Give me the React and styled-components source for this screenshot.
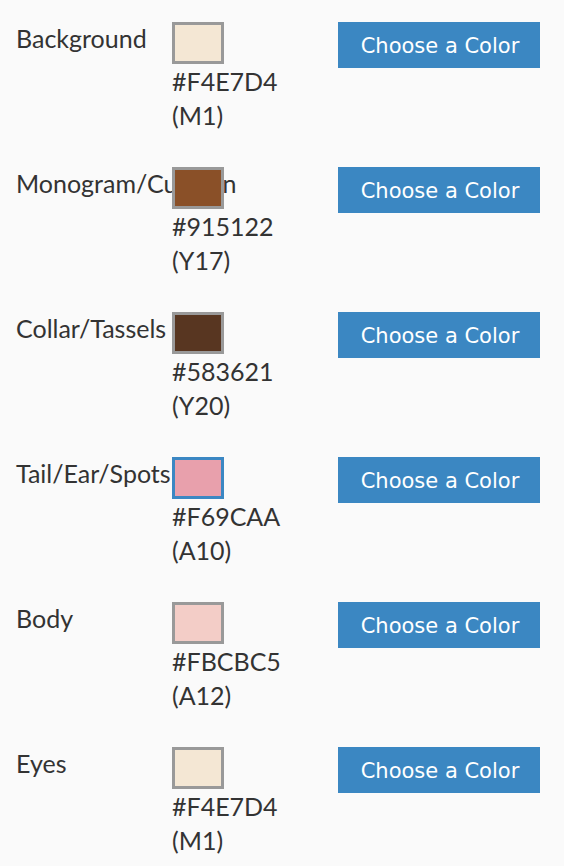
import React from "react";
import styled, { createGlobalStyle } from "styled-components";

const Global = createGlobalStyle`
  html, body { margin: 0; padding: 0; background: #fafafa; }
  body { font-family: Lato, "Noto Sans", sans-serif; color: #333; }
`;

const List = styled.div`
  display: flex;
  flex-direction: column;
  gap: 35px;
  padding: 22px 0 0 16px;
`;

const Row = styled.div`
  display: flex;
  align-items: flex-start;
  height: 110px;
`;

const Label = styled.div`
  width: 156px;
  flex: none;
  font-size: 25px;
  line-height: 34px;
  white-space: nowrap;
  margin-top: -1px;
`;

const SwatchCol = styled.div`
  width: 166px;
  flex: none;
  display: flex;
  flex-direction: column;
`;

const Swatch = styled.div`
  width: 46px;
  height: 36px;
  border: 3px solid ${(p) => (p.$active ? "#3b87c3" : "#999")};
  background: ${(p) => p.$color};
`;

const Info = styled.div`
  font-size: 25px;
  line-height: 34px;
`;

const Button = styled.button`
  width: 202px;
  height: 46px;
  border: none;
  background: #3b87c2;
  color: #fff;
  font-family: "DejaVu Sans", sans-serif;
  font-size: 21px;
  padding: 2px 0 0 2px;
  cursor: pointer;
`;

const rows = [
  { label: "Background", hex: "#F4E7D4", code: "(M1)", color: "#F4E7D4" },
  { label: "Monogram/Cushion", hex: "#915122", code: "(Y17)", color: "#8a5028" },
  { label: "Collar/Tassels", hex: "#583621", code: "(Y20)", color: "#583621" },
  { label: "Tail/Ear/Spots", hex: "#F69CAA", code: "(A10)", color: "#e8a0ac", active: true },
  { label: "Body", hex: "#FBCBC5", code: "(A12)", color: "#f3cdc7" },
  { label: "Eyes", hex: "#F4E7D4", code: "(M1)", color: "#F4E7D4" },
];

export default function App() {
  return (
    <>
      <Global />
      <List>
        {rows.map((r, i) => (
          <Row key={i}>
            <Label>{r.label}</Label>
            <SwatchCol>
              <Swatch $color={r.color} $active={r.active} />
              <Info>
                {r.hex}
                <br />
                {r.code}
              </Info>
            </SwatchCol>
            <Button>Choose a Color</Button>
          </Row>
        ))}
      </List>
    </>
  );
}
